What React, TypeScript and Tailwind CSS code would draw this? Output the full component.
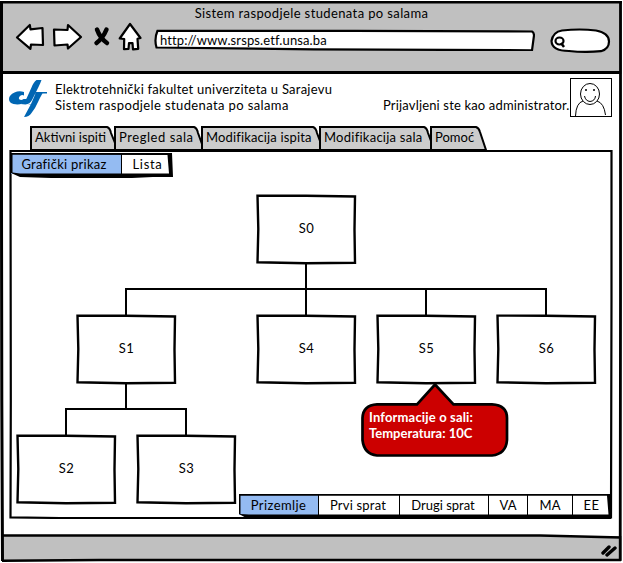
import React from 'react';

const LABEL = "font-['Lato','Liberation_Sans',sans-serif] text-[13px] leading-4 whitespace-nowrap";

function Txt({ children, className = 'text-black' }: { children: React.ReactNode; className?: string }) {
  return <span className={`${LABEL} ${className}`}>{children}</span>;
}

function Toolbar() {
  return (
    <header className="flex h-[74px] flex-col bg-[#c0c0c0]">
      <div className="flex justify-center pt-[5px]">
        <Txt className="tracking-[0.38px]">Sistem raspodjele studenata po salama</Txt>
      </div>
      <div className="flex pl-[15px] pt-px">
        <svg className="h-[31px] w-[139px] shrink-0" viewBox="15 22 139 31" fill="#fff" stroke="#000" strokeWidth="2.2" strokeLinejoin="round">
          <path d="M17 37.500 29.800 25l.7 4.300L42.500 28l.5 17L31 44.500l-.6 4.300Z" />
          <path d="M54 29.500l13.500.5.500-5L81 37 68 48.500l-.5-4L54.500 45.500Z" />
          <path d="M97 29.500Q100 38 107 43M106.500 29.500Q103 38 96.500 43" strokeWidth="4.500" strokeLinecap="round" fill="none" />
          <path d="M130 24 140.500 38l-3 .8.700 10-5.200.5-.5-6.300-3.500.2-.5 5.800-4.500.2.200-10.200-4.500-.5Z" />
        </svg>
        <div className="relative mt-[7px] flex h-[22px] w-[381px] items-center pl-[6px]">
          <svg className="absolute inset-0 h-full w-full" viewBox="0 0 381 22" fill="#fff" stroke="#000" strokeWidth="2.2">
            <path d="M3.500 1.800H200L378 2.500q2 1 2 4L378 21.300 160 20.300 2.500 18.500Q0 10 3.500 1.800Z" />
          </svg>
          <Txt className="relative tracking-[0.12px]">http://www.srsps.etf.unsa.ba</Txt>
        </div>
        <svg className="ml-[15px] mt-[6px] h-[25px] w-[61px] shrink-0" viewBox="550 28 61 25" fill="#fff" stroke="#000" strokeWidth="2.2">
          <path d="M562 30.500Q580 28.500 596 30.500 609 33 609 41.500 609 49 601 51.200 585 52.700 569 51 552 51 551.500 41 553 32 562 30.500Z" />
          <ellipse cx="559.500" cy="41" rx="4" ry="3.500" />
          <path d="M561 43l3 4" strokeWidth="2.500" />
        </svg>
      </div>
    </header>
  );
}

function Logo() {
  return (
    <svg className="mt-[5px] h-[39px] w-[40px]" viewBox="8 79 40 39" fill="#0066b3">
      <path d="M24 92q-5-1.500-9.500.5Q9 95 9 99t4.500 5q5 1 9-.5 3.500-1.500 5-4.500h-4q-2 1.500-4 .5-1.500-1.500.5-3.500 2-1.500 4-.5Z" />
      <path d="M36.500 80h5q-1 3-3 7l-6.500 13q-2 4-6.500 4.500l-5-.5q4-1.500 6-5.500l5-11q2-5.500 5-7.500Z" />
      <path d="M35.500 92H47v1.500h-4.500q-1.500 2-4 7.500-3 7-7 12-2.500 4-7.500 4l7-13q3.500-8 4.500-10.500h-1.500Z" />
      <path d="M27 104.500q4 .5 6.500-1.500l2-4h3q-2 5-5 6Z" />
    </svg>
  );
}

function Avatar() {
  return (
    <svg className="mt-[4px] h-[39px] w-[42px]" viewBox="570 78 42 39" fill="none" stroke="#000" strokeWidth="1">
      <rect x="570.500" y="78.500" width="41" height="38" fill="#fff" />
      <ellipse cx="590" cy="94" rx="9.500" ry="10.500" />
      <path d="M584.500 96q1 5 5.500 5.500 5-.5 5.500-5.500M583 101q-7 2-7.500 15M597 101q7 2 8.500 14" />
      <path d="M586 89v2M594 89v2" strokeWidth="1.500" />
    </svg>
  );
}

function SiteHeader() {
  return (
    <div className="flex h-[52px] pl-[8px]">
      <Logo />
      <div className="ml-[7px] flex w-[328px] flex-col pt-[7px]">
        <Txt className="tracking-[0.24px]">Elektrotehnički fakultet univerziteta u Sarajevu</Txt>
        <Txt className="tracking-[0.38px]">Sistem raspodjele studenata po salama</Txt>
      </div>
      <div className="flex w-[187px] flex-col pt-[23px]"><Txt className="tracking-[0.16px]">Prijavljeni ste kao administrator.</Txt></div>
      <Avatar />
    </div>
  );
}

function Tab({ label, width, viewBox, d, text }: { label: string; width: string; viewBox: string; d: string; text: string }) {
  return (
    <div className={`relative flex h-[25px] items-center pb-[4px] pl-[5px] ${width}`}>
      <svg className="absolute inset-0 h-full w-full overflow-visible" viewBox={viewBox} fill="#ccc" stroke="#000" strokeWidth="2">
        <path d={d} />
      </svg>
      <Txt className={`relative ${text}`}>{label}</Txt>
    </div>
  );
}

function Tabs() {
  return (
    <nav className="flex h-[25px] pl-[30px]">
      <Tab label="Aktivni ispiti" width="w-[84px]" viewBox="0 0 84 25" d="M1 24V1H77q3 1 4 6l4 10v7Z" text="" />
      <Tab label="Pregled sala" width="w-[87px]" viewBox="0 0 87 25" d="M1 24V1H80q3 1 4 6l4 11v6Z" text="tracking-[0.55px]" />
      <Tab label="Modifikacija ispita" width="w-[118px]" viewBox="0 0 118 25" d="M1 24V1H112q3 1 4 6l3 8v9Z" text="tracking-[0.14px]" />
      <Tab label="Modifikacija sala" width="w-[111px]" viewBox="0 0 111 25" d="M1 24V1H105q3 1 4 6l3 8v9Z" text="tracking-[0.25px]" />
      <Tab label="Pomoć" width="w-[56px]" viewBox="0 0 56 25" d="M1 24V1H46q3 1 4 5l6 18Z" text="" />
    </nav>
  );
}

function Node({ label, place }: { label: string; place: string }) {
  return (
    <div className={`absolute flex h-[71px] w-[101px] items-center justify-center ${place}`}>
      <svg className="absolute inset-0 h-full w-full" viewBox="0 0 101 71" fill="#fff" stroke="#000" strokeWidth="2.4">
        <path d="M1.500 1.600 50 1.800 99 2.500l-.5 33 .5 33.300L50 69.300 1.500 68.300 2.300 35Z" />
      </svg>
      <Txt className="relative -top-[2px] tracking-[0.5px]">{label}</Txt>
    </div>
  );
}

function SceneDiagram() {
  return (
    <div className="absolute inset-0">
      <svg className="absolute inset-0 h-full w-full" viewBox="0 150 623 369" fill="none" stroke="#000" strokeWidth="2">
        <path d="M306 262v54M126 316v-27H546v27M426 289v27M126 382v27M66 436v-27H186v27" />
      </svg>
      <Node label="S0" place="left-[256px] top-[44px]" />
      <Node label="S1" place="left-[76px] top-[164px]" />
      <Node label="S4" place="left-[256px] top-[164px]" />
      <Node label="S5" place="left-[376px] top-[164px]" />
      <Node label="S6" place="left-[496px] top-[164px]" />
      <Node label="S2" place="left-[16px] top-[284px]" />
      <Node label="S3" place="left-[136px] top-[284px]" />
      <div className="absolute left-[361px] top-[233px] flex h-[74px] w-[148px] flex-col pl-[8px] pt-[26px]">
        <svg className="absolute inset-0 h-full w-full" viewBox="361 383 148 74" fill="#cc0000" stroke="#000" strokeWidth="2.700">
          <path d="M435 384.500 453.500 404.300H492Q507 405 507 418V440Q506 454 492 455.500H377Q364 454 362.500 440V418Q363 405 377 404.300H417Z" />
        </svg>
        <Txt className="relative font-bold tracking-[0.16px] text-white">Informacije o sali:</Txt>
        <Txt className="relative font-bold text-white">Temperatura: 10C</Txt>
      </div>
    </div>
  );
}

function Cell({ label, width, text = '', active = false, last = false }: { label: string; width: string; text?: string; active?: boolean; last?: boolean }) {
  return (
    <div className={`flex h-full items-center justify-center ${width} ${active ? 'bg-[#94bbf2]' : 'bg-white'} ${last ? '' : 'border-r border-black'}`}>
      <Txt className={text}>{label}</Txt>
    </div>
  );
}

function Bar({ children, width, viewBox, d }: { children: React.ReactNode; width: string; viewBox: string; d: string }) {
  return (
    <div className={`relative flex h-[25px] pb-[4px] pt-px ${width}`}>
      {children}
      <svg className="absolute inset-0 h-full w-full" viewBox={viewBox}><path d={d} /></svg>
    </div>
  );
}

function Panel() {
  return (
    <main className="relative flex h-[369px] flex-col justify-between">
      <svg className="absolute inset-0 h-full w-full" viewBox="0 150 623 369" fill="none" stroke="#000" strokeWidth="2.2">
        <path d="M10.500 151H611.500V300l-.5 217.500L300 518H60L10.500 517.300 10.800 400Z" />
      </svg>
      <SceneDiagram />
      <div className="relative pl-[11px] pt-[3px]">
        <Bar width="w-[162px]" viewBox="0 0 162 25" d="M0 0 161 0 162 24 142 24 121 25H40L9 24 0 20ZM1.500 1.700V19.500L9 20.500H158L156.500 2Z">
          <Cell label="Grafički prikaz" width="w-[111px]" text="relative right-[2px] tracking-[0.25px]" active />
          <Cell label="Lista" width="w-[49px]" text="relative left-px tracking-[0.7px]" last />
        </Bar>
      </div>
      <div className="relative pl-[239px]">
        <Bar width="w-[373px]" viewBox="0 0 373 25" d="M0 0H371L373 7 372 25H9L0 20ZM1.500 1.700V20L10 20.500H369.500L368 1.700Z">
          <Cell label="Prizemlje" width="w-[80px]" text="tracking-[0.4px]" active />
          <Cell label="Prvi sprat" width="w-[81px]" text="relative right-px tracking-[0.2px]" />
          <Cell label="Drugi sprat" width="w-[89px]" text="relative right-px" />
          <Cell label="VA" width="w-[39px]" />
          <Cell label="MA" width="w-[45px]" />
          <Cell label="EE" width="w-[37px]" last text="tracking-[0.4px]" />
        </Bar>
      </div>
    </main>
  );
}

export default function App() {
  return (
    <div className="relative flex h-[563px] w-[623px] flex-col overflow-hidden bg-white">
      <Toolbar />
      <SiteHeader />
      <Tabs />
      <div className="-mt-px"><Panel /></div>
      <footer className="mb-[3px] mt-auto flex h-[24px] items-center justify-end bg-[#c0c0c0] pr-[6px]">
        <svg className="mt-[5px] h-[14px] w-[16px]" viewBox="0 0 16 14" stroke="#000" strokeWidth="3.400" strokeLinecap="round"><path d="M2 9 8 3M6 11 14 4" /></svg>
      </footer>
      <svg className="pointer-events-none absolute inset-0 h-full w-full" viewBox="0 0 623 563" fill="none" stroke="#000">
        <path d="M0 0H623V1H0ZM622 0h1V563h-1ZM0 0h1V563H0Z" fill="#fff" stroke="none" />
        <path d="M1.500 1V200L1.800 400l.7 161" strokeWidth="3" />
        <path d="M1 2.200H622" strokeWidth="2.600" />
        <path d="M620.500 1V300l-.3 261" strokeWidth="2.800" />
        <path d="M2 72.500H621" strokeWidth="2.800" />
        <path d="M2 535.500H540l81 2" strokeWidth="2.600" />
        <path d="M2 560.800 100 560H621" strokeWidth="2.600" />
      </svg>
    </div>
  );
}
